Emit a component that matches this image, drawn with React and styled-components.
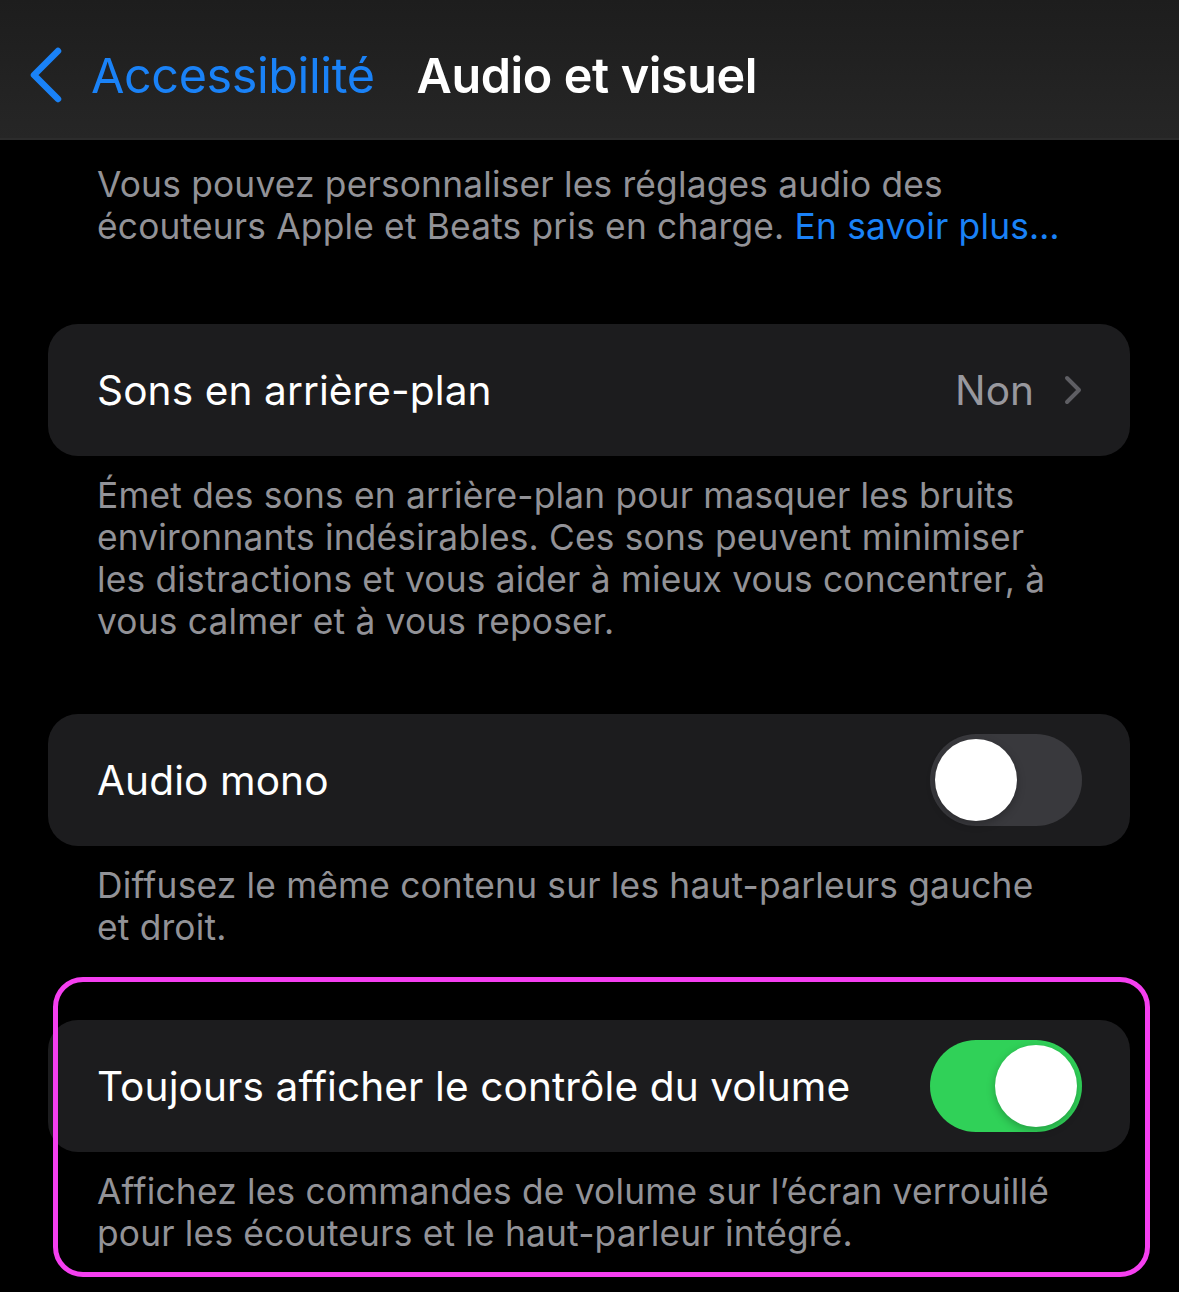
import React from 'react';
import styled, { createGlobalStyle } from 'styled-components';

const GlobalStyle = createGlobalStyle`
    html, body {
        margin: 0;
        padding: 0;
        background: #000;
    }
    body {
        font-family: Inter, "Noto Sans", sans-serif;
        -webkit-font-smoothing: antialiased;
    }
`;

const Screen = styled.div`
    position: relative;
    width: 1179px;
    min-height: 1292px;
    background: #000;
    overflow: hidden;
`;

const NavBar = styled.div`
    height: 140px;
    display: flex;
    align-items: center;
    padding: 0 0 0 28px;
    background: linear-gradient(180deg, #1d1d1d 0%, #262626 100%);
    border-bottom: 2px solid #2c2c2c;
    box-sizing: border-box;
`;

const BackButton = styled.div`
    display: flex;
    align-items: center;
    gap: 27px;
    color: #1a82f7;
    font-size: 48.5px;
    font-weight: 400;
    letter-spacing: -0.4px;
    margin-top: 12px;
`;

const Title = styled.div`
    margin-left: 42px;
    margin-top: 12px;
    color: #fff;
    font-size: 48.5px;
    font-weight: 600;
    letter-spacing: -0.4px;
`;

const Content = styled.div`
    padding: 24px 49px 0 48px;
`;

const Footer = styled.p`
    margin: ${(p) => p.$top ?? 19}px 0 0;
    padding: 0 60px 0 49px;
    color: #929297;
    font-size: 35.3px;
    line-height: 42px;
    letter-spacing: 0.2px;

    a {
        color: #1a82f7;
        text-decoration: none;
    }
`;

const Card = styled.div`
    margin-top: ${(p) => p.$top ?? 71}px;
    height: 132px;
    display: flex;
    align-items: center;
    justify-content: space-between;
    padding: 0 48px 0 49px;
    background: #1c1c1e;
    border-radius: 30px;
`;

const Label = styled.span`
    color: #fff;
    font-size: 40.6px;
    letter-spacing: 0.1px;
`;

const Detail = styled.span`
    display: flex;
    align-items: center;
    gap: 30px;
    color: #98989e;
    font-size: 40.6px;
`;

const Track = styled.div`
    position: relative;
    width: 152px;
    height: 92px;
    border-radius: 46px;
    background: ${(p) => (p.$on ? '#30d158' : '#39393d')};
`;

const Knob = styled.div`
    position: absolute;
    top: 5px;
    left: ${(p) => (p.$on ? '65px' : '5px')};
    width: 82px;
    height: 82px;
    border-radius: 50%;
    background: #fff;
    box-shadow: 0 3px 8px rgba(0, 0, 0, 0.25);
`;

const Highlight = styled.div`
    position: absolute;
    left: 53px;
    top: 977px;
    width: 1097px;
    height: 300px;
    box-sizing: border-box;
    border: 5px solid #f53ff0;
    border-radius: 30px;
    pointer-events: none;
`;

const Toggle = ({ on }) => (
    <Track $on={on}>
        <Knob $on={on} />
    </Track>
);

const App = () => (
    <Screen>
        <GlobalStyle />
        <NavBar>
            <BackButton>
                <svg width="36" height="56" viewBox="0 0 36 56">
                    <path
                        d="M30 4 L6 28 L30 52"
                        fill="none"
                        stroke="#1a82f7"
                        strokeWidth="6.5"
                        strokeLinecap="round"
                        strokeLinejoin="round"
                    />
                </svg>
                Accessibilité
            </BackButton>
            <Title>Audio et visuel</Title>
        </NavBar>

        <Content>
            <Footer $top={0}>
                Vous pouvez personnaliser les réglages audio des écouteurs Apple et Beats pris en charge.{' '}
                <a href="#">En savoir plus…</a>
            </Footer>

            <Card $top={76}>
                <Label>Sons en arrière-plan</Label>
                <Detail>
                    Non
                    <svg width="18" height="30" viewBox="0 0 18 30">
                        <path
                            d="M3 3 L15 15 L3 27"
                            fill="none"
                            stroke="#5e5e63"
                            strokeWidth="4"
                            strokeLinecap="round"
                            strokeLinejoin="round"
                        />
                    </svg>
                </Detail>
            </Card>
            <Footer>
                Émet des sons en arrière-plan pour masquer les bruits environnants indésirables. Ces sons peuvent
                minimiser les distractions et vous aider à mieux vous concentrer, à vous calmer et à vous reposer.
            </Footer>

            <Card>
                <Label>Audio mono</Label>
                <Toggle on={false} />
            </Card>
            <Footer>Diffusez le même contenu sur les haut-parleurs gauche et droit.</Footer>

            <Card>
                <Label>Toujours afficher le contrôle du volume</Label>
                <Toggle on />
            </Card>
            <Footer>
                Affichez les commandes de volume sur l’écran verrouillé pour les écouteurs et le haut-parleur
                intégré.
            </Footer>
        </Content>

        <Highlight />
    </Screen>
);

export default App;
